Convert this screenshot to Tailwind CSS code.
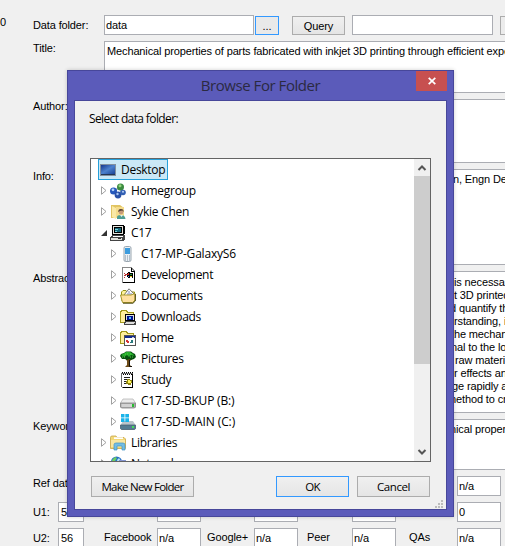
<!DOCTYPE html>
<html lang="en">
<head>
<meta charset="utf-8">
<title>Browse For Folder</title>
<script src="https://cdn.jsdelivr.net/npm/@tailwindcss/browser@4"></script>
</head>
<body class="relative w-[505px] h-[546px] overflow-hidden bg-[#f0f0f0] text-black whitespace-nowrap">
<svg class="hidden"><defs>
<symbol id="closed" viewBox="0 0 6 9"><path d="M.5 .7V8.3L5 4.5Z" fill="#fff" stroke="#a0a0a0"/></symbol>
<symbol id="open" viewBox="0 0 6 6"><path d="M6 0V6H0Z" fill="#333"/></symbol>
</defs></svg>

<!-- reference form -->
<main class="flex flex-col pt-[15px] gap-[6px] w-[505px] h-[546px] overflow-hidden font-['Liberation_Sans',Arial,sans-serif] text-[11px] leading-[13px] tracking-[-0.13px]">
  <div class="flex h-[20px] shrink-0"><span class="w-[33px] shrink-0 pt-px">0</span><label class="w-[71px] shrink-0 pt-[4px]">Data folder:</label><div class="w-[150px] shrink-0 border border-[#abadb3] bg-white pl-[1px] pt-[3px]">data</div><div class="ml-[1px] mt-[1px] w-[24px] shrink-0 border border-[#3399ff] bg-[#e9e9e9] text-center pt-[3px]">...</div><div class="ml-[13px] mt-[1px] w-[53px] shrink-0 border border-[#acacac] bg-linear-to-b from-[#f0f0f0] to-[#e5e5e5] text-center pt-[3px]">Query</div><div class="ml-[7px] w-[141px] shrink-0 border border-[#abadb3] bg-white"></div><div class="ml-[7px] mt-[1px] w-[40px] shrink-0 border border-[#acacac] bg-[#ececec]"></div></div>
  <div class="flex h-[52px] shrink-0"><label class="w-[104px] shrink-0 pl-[33px] pt-px">Title:</label><div class="w-[410px] shrink-0 border border-[#abadb3] bg-white pl-[2px] pt-[3px]">Mechanical properties of parts fabricated with inkjet 3D printing through efficient experimental</div></div>
  <div class="flex h-[64px] shrink-0"><label class="w-[104px] shrink-0 pl-[33px] pt-px">Author:</label><div class="w-[410px] shrink-0 border border-[#abadb3] bg-white"></div></div>
  <div class="flex h-[96px] shrink-0"><label class="w-[104px] shrink-0 pl-[33px] pt-px">Info:</label><div class="w-[410px] shrink-0 border border-[#abadb3] bg-white pl-[348px] pt-[3px]">n, Engn Des</div></div>
  <div class="flex h-[142px] shrink-0"><label class="w-[104px] shrink-0 pl-[33px] pt-px">Abstract:</label><div class="w-[410px] shrink-0 border border-[#abadb3] bg-white pt-[4px]"><p class="pl-[349px]">is necessary</p><p class="pl-[349px]">t 3D printed</p><p class="pl-[345px]">d quantify the</p><p class="pl-[349px]">rstanding, it</p><p class="pl-[346px]">the mechanical</p><p class="pl-[346px]">nal to the loa</p><p class="pl-[350px]">raw material</p><p class="pl-[343px]">or effects and</p><p class="pl-[347px]">ge rapidly and</p><p class="pl-[342px]">method to cre</p></div></div>
  <div class="flex h-[51px] shrink-0"><label class="w-[104px] shrink-0 pl-[33px] pt-px">Keywords:</label><div class="w-[410px] shrink-0 border border-[#abadb3] bg-white pl-[345px] pt-[3px]">nical property</div></div>
  <div class="grid shrink-0 grid-cols-[25px_26px_20px_53px_44px_6px_47px_44px_9px_45px_44px_13px_48px_44px] auto-rows-[20px] gap-y-[6px] pl-[33px]">
    <label class="pt-[1px]">Ref date:</label><i class="col-span-12"></i><div class="border border-[#abadb3] bg-white pl-[1px] pt-[3px]">n/a</div>
    <label class="pt-[4px]">U1:</label><div class="border border-[#abadb3] bg-white pl-[2px] pt-[3px]">57</div><i></i><i></i><div class="border border-[#abadb3] bg-white"></div><i></i><i></i><div class="border border-[#abadb3] bg-white"></div><i></i><i></i><div class="border border-[#abadb3] bg-white"></div><i></i><label class="pt-[3px]">Ready</label><div class="border border-[#abadb3] bg-white pl-[1px] pt-[3px]">0</div>
    <label class="pt-[4px]">U2:</label><div class="border border-[#abadb3] bg-white pl-[2px] pt-[3px]">56</div><i></i><label class="pt-[3px]">Facebook</label><div class="border border-[#abadb3] bg-white pl-[1px] pt-[3px]">n/a</div><i></i><label class="pt-[3px]">Google+</label><div class="border border-[#abadb3] bg-white pl-[1px] pt-[3px]">n/a</div><i></i><label class="pt-[3px]">Peer</label><div class="border border-[#abadb3] bg-white pl-[1px] pt-[3px]">n/a</div><i></i><label class="pt-[3px]">QAs</label><div class="border border-[#abadb3] bg-white pl-[1px] pt-[3px]">n/a</div>
  </div>
</main>

<!-- folder dialog -->
<section class="absolute left-[67px] top-[70px] w-[387px] h-[447px] flex flex-col border border-[#47479a] bg-[#5b5bba] px-[6px] pb-[6px] shadow-[0_0_4px_rgba(0,0,0,.2)] font-['Open_Sans','Noto_Sans',sans-serif] text-[12px] tracking-[-0.28px]">
  <header class="relative h-[29px] shrink-0 text-center text-[15px] tracking-[-0.45px] leading-[29px] text-[#2b2a42]">Browse For Folder<div class="absolute right-0 top-0 w-[31px] h-[20px] bg-[#c75050] flex items-center justify-center"><svg width="8" height="8" viewBox="0 0 8 8"><path d="M.7 .8L7.3 7.2M7.3 .8L.7 7.2" stroke="#fff" stroke-width="1.7"/></svg></div></header>
  <div class="flex-1 flex flex-col border border-[#47479a] bg-[#f0f0f0] pl-[15px] pr-[15px] relative">
    <p class="h-[57px] pt-[9px] leading-[18px] -ml-px tracking-[-0.62px]">Select data folder:</p>
    <div class="flex h-[304px] border border-[#646464] bg-white overflow-hidden">
      <div class="flex-1 flex flex-col pl-[7px] leading-[20px]">
        <div class="h-[21px] shrink-0 flex items-center w-[70px] border border-[#26a0da] bg-[#cbe8f6] pl-[1px] gap-[5px]"><svg width="16" height="16" viewBox="0 0 16 16"><defs><linearGradient id="scr" x1="0" y1="0" x2="1" y2="1"><stop offset="0" stop-color="#17378e"/><stop offset=".5" stop-color="#4d82ce"/><stop offset="1" stop-color="#1b4295"/></linearGradient></defs><path d="M0 2H16V14H0Z" fill="#82909f"/><path d="M1 3H15V12H1Z" fill="url(#scr)"/><path d="M1 12.5H15" stroke="#243653"/></svg><span class="pt-px">Desktop</span></div>
        <div class="h-[21px] shrink-0 flex items-center pl-[3px]"><svg width="6" height="9" class="mr-[3px]"><use href="#closed"/></svg><svg width="16" height="16" viewBox="0 0 16 16" class="mr-[5px]"><path d="M4 8L10 4L12 11L8 12Z" fill="none" stroke="#a7b6c4" stroke-width="2"/><circle cx="3.5" cy="8" r="3.5" fill="#2457bb"/><circle cx="10.5" cy="4" r="3.5" fill="#3b8b40"/><circle cx="8" cy="12" r="3.4" fill="#2850a7"/><circle cx="13" cy="9.5" r="2.8" fill="#3360b4"/><circle cx="3" cy="6.8" r="1.4" fill="#b4d4fa"/><circle cx="10" cy="2.8" r="1.5" fill="#94d67e"/><circle cx="7.5" cy="11" r="1.2" fill="#a9c9f5"/><circle cx="13" cy="8.8" r="1" fill="#b9d0f4"/></svg>Homegroup</div>
        <div class="h-[21px] shrink-0 flex items-center pl-[3px]"><svg width="6" height="9" class="mr-[3px]"><use href="#closed"/></svg><svg width="16" height="16" viewBox="0 0 16 16" class="mr-[5px]"><path d="M1 1H10L14 4V14H1Z" fill="#e1c462"/><path d="M2 2L6 4V15L2 13Z" fill="#fae9a6"/><path d="M6 3H14V14H6Z" fill="#f5dc8b"/><circle cx="11" cy="8" r="2.4" fill="#c89a7a"/><path d="M8 8Q8.500 4.500 11 5Q14 5 13.500 8L12.500 6.500L10 7Z" fill="#5a4639"/><path d="M7 15V13Q7 11 11 11Q15 11 15.500 15Z" fill="#4f9d93"/><path d="M10 11L11.500 13L13 11Z" fill="#e9f1ec"/></svg>Sykie Chen</div>
        <div class="h-[21px] shrink-0 flex items-center pl-[3px]"><svg width="6" height="6" class="mr-[3px]"><use href="#open"/></svg><svg width="16" height="16" viewBox="0 0 16 16" class="mr-[5px]" shape-rendering="crispEdges"><path d="M2 0H13L15 1V9L13 10H2Z" fill="#000"/><path d="M3 1H13V9H3Z" fill="#e4e4dd"/><path d="M4 2H12V8H4Z" fill="#000"/><path d="M5 3H11V7H5Z" fill="#17677a"/><path d="M5 4.500H8M5 6.500H7" stroke="#7fd8df"/><path d="M2 10H15V14L13 16H0V13Z" fill="#444"/><path d="M3 11H13L12 12H2Z" fill="#fff"/><path d="M1 13H12V15H1Z" fill="#e0e0da"/><path d="M8 13.500H11" stroke="#333"/></svg>C17</div>
        <div class="h-[21px] shrink-0 flex items-center pl-[13px]"><svg width="6" height="9" class="mr-[3px]"><use href="#closed"/></svg><svg width="16" height="16" viewBox="0 0 16 16" class="mr-[5px]"><rect x="4" y=".5" width="7" height="15" rx="1.5" fill="#eaf0f5" stroke="#9ba7b0"/><path d="M5 2H10V8H5Z" fill="#3c9cde"/><path d="M5 10H10M5 12H10M5 14H10" stroke="#8090a0" stroke-dasharray="1 1"/></svg><span class="tracking-[-0.2px]">C17-MP-GalaxyS6</span></div>
        <div class="h-[21px] shrink-0 flex items-center pl-[13px]"><svg width="6" height="9" class="mr-[3px]"><use href="#closed"/></svg><svg width="16" height="16" viewBox="0 0 16 16" class="mr-[5px]" shape-rendering="crispEdges"><path d="M2.5 .5H11L14.5 4V15.5H2.5Z" fill="#fff" stroke="#888"/><path d="M14.5 4V15.5H3" fill="none" stroke="#000"/><path d="M11.500 1V4.500H15" fill="none" stroke="#000"/><path d="M7 6L9 5L10 6H13V11L11 10L9 11L7 10Z" fill="#000"/><path d="M8 6H9V8H7Z" fill="#d32424"/><path d="M10 7H12V8H10Z" fill="#249632"/><path d="M8 9H9V10H8Z" fill="#5273f0"/><path d="M10 9H12V10H10Z" fill="#dcc51a"/><path d="M4 6.500H5M5 7.500H7M4 8.500H6M4 10.500H5" stroke="#b33"/></svg>Development</div>
        <div class="h-[21px] shrink-0 flex items-center pl-[13px]"><svg width="6" height="9" class="mr-[3px]"><use href="#closed"/></svg><svg width="16" height="16" viewBox="0 0 16 16" class="mr-[5px]"><path d="M1.5 7V4L3 2.5H6L7 4H14.5V13H2Z" fill="#fff39a" stroke="#96941a"/><path d="M4 7L9 .8L15 7V9H4Z" fill="#fff" stroke="#555" stroke-width=".8"/><path d="M8 4H10M7 6H12" stroke="#7883c0"/><path d="M.5 7H11L15 5.5V12L12.5 14.500H2.5Z" fill="#ffe0a0" stroke="#a8992b"/><path d="M3 15.2H13L15.3 13V6" fill="none" stroke="#49440a"/></svg>Documents</div>
        <div class="h-[21px] shrink-0 flex items-center pl-[13px]"><svg width="6" height="9" class="mr-[3px]"><use href="#closed"/></svg><svg width="16" height="16" viewBox="0 0 16 16" class="mr-[5px]" shape-rendering="crispEdges"><path d="M.5 13.5V3L2 1.5H6L8 3.5H13.5V13.5Z" fill="#ffef9d" stroke="#a39a1d"/><path d="M5 5H14L15 6V12H5Z" fill="#000"/><path d="M6 6H14V11H6Z" fill="#ddd"/><path d="M7 7H13V11H7Z" fill="#00138f"/><path d="M9 8H11V10H9Z" fill="#55c1fe"/><path d="M5 12H16V15L15 16H4V13Z" fill="#444"/><path d="M6 13H15L14 15H5Z" fill="#ddd"/></svg>Downloads</div>
        <div class="h-[21px] shrink-0 flex items-center pl-[13px]"><svg width="6" height="9" class="mr-[3px]"><use href="#closed"/></svg><svg width="16" height="16" viewBox="0 0 16 16" class="mr-[5px]" shape-rendering="crispEdges"><path d="M.5 13.5V3L2 1.5H6L8 3.5H13.5V13.5Z" fill="#ffef9d" stroke="#a39a1d"/><path d="M4.5 5.5H15.5V15.5H4.5Z" fill="#fff" stroke="#555"/><path d="M5 6H15V8H5Z" fill="#132a8f"/><path d="M12 7H14" stroke="#ccc"/><path d="M6 10H8V11H9V13H7V12H6Z" fill="#d33535"/><path d="M11 10H13V13H10V12H11Z" fill="#28787d"/></svg>Home</div>
        <div class="h-[21px] shrink-0 flex items-center pl-[13px]"><svg width="6" height="9" class="mr-[3px]"><use href="#closed"/></svg><svg width="16" height="16" viewBox="0 0 16 16" class="mr-[5px]"><path d="M5 7L7 10V14L5 16H12L10 14V10L13 7Z" fill="#6b4a17"/><path d="M9.5 9V15.5H12" fill="none" stroke="#17120b"/><path d="M0 5L1 3L4 2L6 .5H11L13 2L15 3L16 6L14 8L11 9L9 8L7 9L5 8L2 8Z" fill="#064f10"/><path d="M1 4L4 2.5L6 1H10L13 3L14 5L11 4L9 6L7 4L4 6L3 5Z" fill="#25ad2c"/><path d="M5 3H8M10 3H12M2 6H5M10 6H13" stroke="#59d147" stroke-dasharray="1 1"/></svg>Pictures</div>
        <div class="h-[21px] shrink-0 flex items-center pl-[13px]"><svg width="6" height="9" class="mr-[3px]"><use href="#closed"/></svg><svg width="16" height="16" viewBox="0 0 16 16" class="mr-[5px]" shape-rendering="crispEdges"><path d="M1.5 1.5H12.5V15.500H2.500L1.5 14Z" fill="#fff" stroke="#666"/><path d="M2 .5H13M3 2.5H13" stroke="#000" stroke-dasharray="1 1"/><path d="M4 5.5H10M4 7.5H7M4 9.5H6M4 11.5H6" stroke="#222"/><path d="M7 7H10V8H12V11H11V13H8V12H6V9H7Z" fill="#8f8510"/><path d="M8 8H10V9H11V11H8Z" fill="#fff45b"/><path d="M12.5 2V15.5H3" fill="none" stroke="#000"/></svg>Study</div>
        <div class="h-[21px] shrink-0 flex items-center pl-[13px]"><svg width="6" height="9" class="mr-[3px]"><use href="#closed"/></svg><svg width="16" height="16" viewBox="0 0 16 16" class="mr-[5px]"><path d="M3 6H13L15.5 10V14H.5V10Z" fill="#ececec" stroke="#b0b0b0" stroke-width=".7"/><path d="M.5 10H15.5V14L14.5 15H1.5L.5 14Z" fill="#aaa" stroke="#858585" stroke-width=".8"/><path d="M1.5 11H12V14H1.5Z" fill="#d2d2d2"/><path d="M12 11H14V14H12Z" fill="#29bd31"/></svg><span class="tracking-[-0.2px]">C17-SD-BKUP (B:)</span></div>
        <div class="h-[21px] shrink-0 flex items-center pl-[13px]"><svg width="6" height="9" class="mr-[3px]"><use href="#closed"/></svg><svg width="16" height="16" viewBox="0 0 16 16" class="mr-[5px]"><path d="M3 7H13L15.5 11V15.5H.5V11Z" fill="#bac4ca"/><path d="M.5 11H15.5V14.5L14.5 15.5H1.5L.5 14.5Z" fill="#557b91" stroke="#41596a" stroke-width=".7"/><path d="M12 12H14V14H12Z" fill="#46dc5a"/><path d="M1 0H4.5V3.5H1ZM5.3 0H9V3.5H5.3ZM1 4.3H4.5V8H1ZM5.3 4.3H9V8H5.3Z" fill="#19b3e9"/></svg><span class="tracking-[-0.12px]">C17-SD-MAIN (C:)</span></div>
        <div class="h-[21px] shrink-0 flex items-center pl-[3px]"><svg width="6" height="9" class="mr-[3px]"><use href="#closed"/></svg><svg width="16" height="16" viewBox="0 0 16 16" class="mr-[5px]"><path d="M.5 2.5Q.5 1 2 1H6L7 2.5H14L15.5 4V13.5H.5Z" fill="#f2d877" stroke="#c7a447" stroke-width=".8"/><path d="M4 2.3H13V4H4Z" fill="#fff"/><path d="M1 5H15V12H1Z" fill="#f8e7a2"/><path d="M4 15V9.5Q4 8 6 8H13Q15 8 15 10V15H12V11H7V15Z" fill="#72bde5" stroke="#4194c2" stroke-width=".7"/></svg>Libraries</div>
        <div class="h-[21px] shrink-0 flex items-center pl-[3px]"><svg width="6" height="9" class="mr-[3px]"><use href="#closed"/></svg><svg width="16" height="16" viewBox="0 0 16 16" class="mr-[5px]"><circle cx="6.500" cy="6" r="5.5" fill="#2770c5"/><path d="M2 4L5 1L7 2L5 5L3 7Z" fill="#6fd060"/><path d="M7 4L9 2L11 5L8 8Z" fill="#b4e7f3"/><path d="M9 4H16V12H9Z" fill="#8292cf"/></svg>Network</div>
      </div>
      <div class="w-[16px] bg-[#f0f0f0] flex flex-col items-center"><svg class="h-[17px] shrink-0" width="16" height="17" viewBox="0 0 16 17"><path d="M4.5 11L8 7.5L11.5 11" fill="none" stroke="#555" stroke-width="2"/></svg><div class="w-[16px] h-[188px] bg-[#cdcdcd]"></div><svg class="mt-auto h-[17px] shrink-0" width="16" height="17" viewBox="0 0 16 17"><path d="M4.5 6L8 9.5L11.5 6" fill="none" stroke="#555" stroke-width="2"/></svg></div>
    </div>
    <div class="flex mt-[14px] h-[21px] pl-[1px] text-center leading-[20px] text-[11.5px] tracking-[-0.75px]"><div class="w-[103px] border border-[#acacac] bg-linear-to-b from-[#f0f0f0] to-[#e5e5e5] word-spacing-[1px]">Make New Folder</div><div class="ml-[82px] w-[73px] border border-[#3399ff] bg-linear-to-b from-[#f0f0f0] to-[#e5e5e5]">OK</div><div class="ml-[8px] w-[73px] border border-[#acacac] bg-linear-to-b from-[#f0f0f0] to-[#e5e5e5] tracking-[-0.4px]">Cancel</div></div>
    <svg class="absolute right-[3px] bottom-[1px]" width="8" height="8" viewBox="0 0 8 8" fill="#bcbcbc"><path d="M6 0H8V2H6ZM3 3H5V5H3ZM6 3H8V5H6ZM0 6H2V8H0ZM3 6H5V8H3ZM6 6H8V8H6Z"/></svg>
  </div>
</section>
</body>
</html>
